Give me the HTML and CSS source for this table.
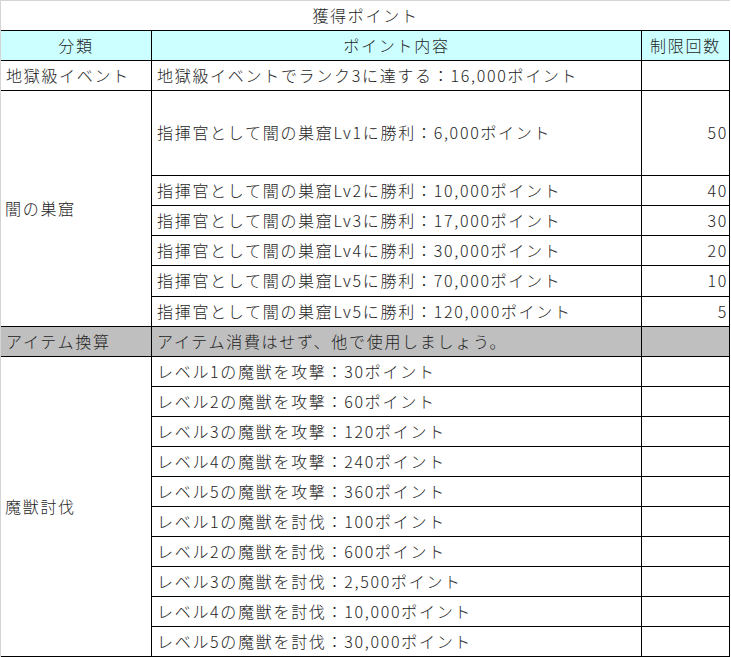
FILE: index.html
```html
<!DOCTYPE html>
<html lang="ja">
<head>
<meta charset="utf-8">
<title>獲得ポイント</title>
<link rel="stylesheet" href="styles.css">
</head>
<body>
<div class="sheet">
  <div class="title">獲得ポイント</div>
  <div class="grid">
    <div class="cell head">分類</div>
    <div class="cell head">ポイント内容</div>
    <div class="cell head">制限回数</div>

    <div class="cell">地獄級イベント</div>
    <div class="cell">地獄級イベントでランク3に達する：16,000ポイント</div>
    <div class="cell num"></div>

    <div class="cell span-dark">闇の巣窟</div>
    <div class="cell">指揮官として闇の巣窟Lv1に勝利：6,000ポイント</div>
    <div class="cell num">50</div>
    <div class="cell">指揮官として闇の巣窟Lv2に勝利：10,000ポイント</div>
    <div class="cell num">40</div>
    <div class="cell">指揮官として闇の巣窟Lv3に勝利：17,000ポイント</div>
    <div class="cell num">30</div>
    <div class="cell">指揮官として闇の巣窟Lv4に勝利：30,000ポイント</div>
    <div class="cell num">20</div>
    <div class="cell">指揮官として闇の巣窟Lv5に勝利：70,000ポイント</div>
    <div class="cell num">10</div>
    <div class="cell">指揮官として闇の巣窟Lv5に勝利：120,000ポイント</div>
    <div class="cell num">5</div>

    <div class="cell gray">アイテム換算</div>
    <div class="cell gray">アイテム消費はせず、他で使用しましょう。</div>
    <div class="cell gray"></div>

    <div class="cell span-beast">魔獣討伐</div>
    <div class="cell">レベル1の魔獣を攻撃：30ポイント</div>
    <div class="cell num"></div>
    <div class="cell">レベル2の魔獣を攻撃：60ポイント</div>
    <div class="cell num"></div>
    <div class="cell">レベル3の魔獣を攻撃：120ポイント</div>
    <div class="cell num"></div>
    <div class="cell">レベル4の魔獣を攻撃：240ポイント</div>
    <div class="cell num"></div>
    <div class="cell">レベル5の魔獣を攻撃：360ポイント</div>
    <div class="cell num"></div>
    <div class="cell">レベル1の魔獣を討伐：100ポイント</div>
    <div class="cell num"></div>
    <div class="cell">レベル2の魔獣を討伐：600ポイント</div>
    <div class="cell num"></div>
    <div class="cell">レベル3の魔獣を討伐：2,500ポイント</div>
    <div class="cell num"></div>
    <div class="cell">レベル4の魔獣を討伐：10,000ポイント</div>
    <div class="cell num"></div>
    <div class="cell">レベル5の魔獣を討伐：30,000ポイント</div>
    <div class="cell num"></div>
  </div>
</div>
</body>
</html>
```
FILE: styles.css
```css
html, body {
  margin: 0;
  padding: 0;
  background: #ffffff;
}

body {
  font-family: "Noto Sans CJK JP", "Noto Sans", sans-serif;
  font-size: 16px;
  font-weight: 300;
  letter-spacing: 1.7px;
  color: #1e1e1e;
}

.sheet {
  width: 729px;
  border-left: 1px solid #d4d4d4;
  border-top: 1px solid #d4d4d4;
}

.title {
  height: 29px;
  display: flex;
  align-items: center;
  justify-content: center;
  padding-bottom: 2px;
  box-sizing: border-box;
  line-height: 1;
}

.grid {
  display: grid;
  grid-template-columns: 150px 489px 87px;
  grid-template-rows: 29px 29px 84px 29px 29px 29px 30px 29px 29px repeat(10, 29px);
  gap: 1px;
  padding: 1px 1px 1px 0;
  background: #000000;
}

.cell {
  background: #ffffff;
  display: flex;
  align-items: center;
  padding: 0 4px 2px 5px;
  white-space: nowrap;
  overflow: hidden;
  line-height: 1;
}

.head {
  background: #ccffff;
  justify-content: center;
  padding: 0 0 2px 0;
}

.num {
  justify-content: flex-end;
  padding: 0 1px 2px 0;
}

.gray {
  background: #bfbfbf;
}

.span-dark {
  grid-row: 3 / span 6;
  padding-left: 4px;
}

.span-beast {
  grid-row: 10 / span 10;
  padding-left: 4px;
}
```
